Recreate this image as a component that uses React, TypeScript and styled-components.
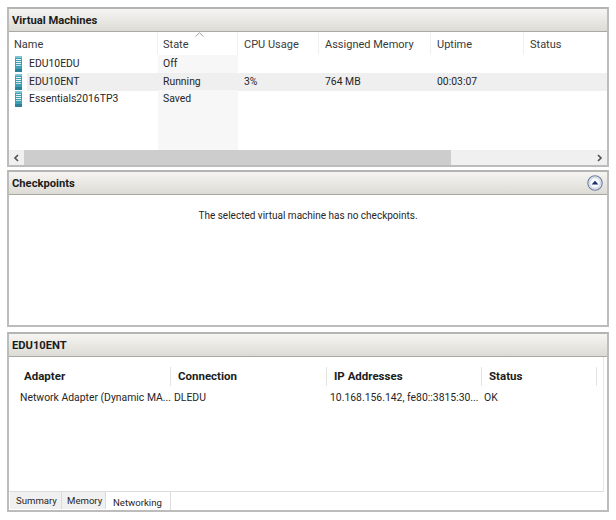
import React from 'react'
import styled, { createGlobalStyle } from 'styled-components'

const GlobalStyle = createGlobalStyle`
    html, body {
        margin: 0;
        background: #ffffff;
    }
    body {
        font-family: Roboto, "Liberation Sans", sans-serif;
        font-size: 10.4px;
        color: #262626;
    }
`;

const Page = styled.div`
    width: 602px;
    height: 520px;
    padding: 7px 0 0 7px;
    display: flex;
    flex-direction: column;
`;

const Panel = styled.section<{ $height: number; $gap: number }>`
    height: ${p => p.$height}px;
    margin-bottom: ${p => p.$gap}px;
    flex: none;
    box-sizing: border-box;
    border: 2px solid #bcbcbc;
    border-top-color: #b4b4b4;
    display: flex;
    flex-direction: column;
    background: #ffffff;
`;

const PanelHeader = styled.header`
    height: 23px;
    flex: none;
    box-sizing: border-box;
    padding: 0 4px 0 3px;
    display: flex;
    align-items: center;
    justify-content: space-between;
    background: linear-gradient(#f6f5f2, #dddbd5);
    border-bottom: 1px solid #a9a8a2;
    font-size: 11.2px;
    font-weight: 700;
    color: #1c1c1c;
`;

const vmColumns = '149px 80px 81px 112px 93px 1fr';

const VmHead = styled.div`
    display: grid;
    grid-template-columns: ${vmColumns};
    height: 23px;
    flex: none;
`;

const VmHeadCell = styled.div`
    position: relative;
    box-sizing: border-box;
    padding: 4px 0 0 5px;
    border-right: 1px solid #f0f0f0;
    font-size: 11px;
    line-height: 18px;
    color: #3a3a3a;
    &:nth-child(n + 3) {
        padding-left: 6px;
    }
    &:last-child {
        border-right: none;
    }
`;

const SortCaret = styled.svg`
    position: absolute;
    left: 37px;
    top: 0;
`;

const VmBody = styled.div`
    flex: 1;
    display: flex;
    flex-direction: column;
`;

const VmRow = styled.div<{ $fill?: boolean }>`
    display: grid;
    grid-template-columns: ${vmColumns};
    height: ${p => (p.$fill ? 'auto' : '17.6px')};
    flex: ${p => (p.$fill ? 1 : 'none')};
    line-height: 18px;
`;

const VmCell = styled.div<{ $sorted?: boolean; $selected?: boolean }>`
    padding-left: 5px;
    background: ${p => (p.$selected ? '#efefef' : p.$sorted ? '#f7f7f7' : 'transparent')};
    white-space: nowrap;
    &:nth-child(n + 3) {
        padding-left: 6px;
    }
`;

const NameCell = styled.div`
    display: flex;
    align-items: center;
`;

const IconSlot = styled.span`
    width: 18px;
    flex: none;
    display: flex;
    justify-content: center;
`;

const NameText = styled.span<{ $selected?: boolean }>`
    flex: 1;
    padding-left: 2px;
    background: ${p => (p.$selected ? '#efefef' : 'transparent')};
`;

const ScrollBar = styled.div`
    height: 15px;
    flex: none;
    display: flex;
    align-items: center;
    background: #f0f0f0;
`;

const ScrollButton = styled.span`
    width: 15px;
    height: 15px;
    flex: none;
    display: flex;
    align-items: center;
    justify-content: center;
`;

const ScrollTrack = styled.div`
    flex: 1;
    height: 15px;
`;

const ScrollThumb = styled.div`
    width: 427px;
    height: 100%;
    background: #cdcdcd;
`;

const EmptyMessage = styled.div`
    text-align: center;
    padding-top: 13px;
    font-size: 10px;
    line-height: 16px;
    color: #262626;
`;

const DetailBody = styled.div`
    flex: 1;
    margin-right: 3px;
    border-bottom: 1px solid #dcdcdc;
    border-right: 1px solid #e6e6e6;
    padding-top: 10px;
`;

const adapterColumns = '162px 156px 155px 115px';

const AdapterHead = styled.div`
    display: grid;
    grid-template-columns: ${adapterColumns};
    height: 19px;
`;

const AdapterHeadCell = styled.div`
    box-sizing: border-box;
    padding-left: 7px;
    border-right: 1px solid #e4e4e4;
    font-size: 11.5px;
    font-weight: 700;
    line-height: 19px;
    color: #1c1c1c;
    &:first-child {
        padding-left: 15px;
    }
`;

const AdapterRow = styled.div`
    display: grid;
    grid-template-columns: ${adapterColumns};
    margin-top: 4px;
    line-height: 16px;
    white-space: nowrap;
`;

const AdapterCell = styled.div`
    padding-left: 3px;
    &:first-child {
        padding-left: 11px;
    }
    &:last-child {
        padding-left: 2px;
    }
`;

const TabStrip = styled.div`
    height: 18px;
    flex: none;
    display: flex;
    padding-left: 1px;
`;

const Tab = styled.div<{ $active?: boolean; $width: number; $inset: number }>`
    box-sizing: border-box;
    width: ${p => p.$width}px;
    padding: ${p => (p.$active ? 3 : 1)}px 0 0 ${p => p.$inset}px;
    font-size: 9.6px;
    line-height: 15px;
    background: ${p => (p.$active ? '#ffffff' : '#f0f0f0')};
    border-right: 1px solid #dcdcdc;
    height: ${p => (p.$active ? '18px' : '17px')};
`;

const VmIcon = () => (
    <svg width="7" height="16" viewBox="0 0 7 16">
        <rect x="0" y="0" width="7" height="16" fill="#3f9fb5" />
        <rect x="0" y="0" width="7" height="2" fill="#7fc4d2" />
        <rect x="1" y="3" width="5" height="1" fill="#e4f2f5" />
        <rect x="1" y="5" width="5" height="1" fill="#e4f2f5" />
        <rect x="1" y="7" width="5" height="1" fill="#e4f2f5" />
        <rect x="1" y="9" width="5" height="1" fill="#bfe0e7" />
        <rect x="0" y="13" width="7" height="3" fill="#2b8198" />
    </svg>
);

const CollapseIcon = () => (
    <svg width="16" height="16" viewBox="0 0 16 16">
        <circle cx="8" cy="8" r="7.2" fill="#e6ebf3" stroke="#6d7f9c" strokeWidth="1.1" />
        <circle cx="8" cy="8" r="5.4" fill="#f7f9fc" stroke="#c3ccdb" strokeWidth="0.8" />
        <path d="M4.6 9.4 L8 5.8 L11.4 9.4 Z" fill="#1c2f6e" />
    </svg>
);

const Chevron = ({ dir }: { dir: 'left' | 'right' }) => (
    <svg width="7" height="8" viewBox="0 0 7 8">
        <path
            d={dir === 'left' ? 'M5 1 L2 4 L5 7' : 'M2 1 L5 4 L2 7'}
            fill="none"
            stroke="#505050"
            strokeWidth="1.6"
        />
    </svg>
);

const vms = [
    { name: 'EDU10EDU', state: 'Off', cpu: '', memory: '', uptime: '' },
    { name: 'EDU10ENT', state: 'Running', cpu: '3%', memory: '764 MB', uptime: '00:03:07', selected: true },
    { name: 'Essentials2016TP3', state: 'Saved', cpu: '', memory: '', uptime: '' },
];

export default function App() {
    return (
        <Page>
            <GlobalStyle />

            <Panel $height={160} $gap={3}>
                <PanelHeader>Virtual Machines</PanelHeader>
                <VmHead>
                    <VmHeadCell>Name</VmHeadCell>
                    <VmHeadCell>
                        State
                        <SortCaret width="9" height="5" viewBox="0 0 9 5">
                            <path d="M0.5 4.5 L4.5 0.8 L8.5 4.5" fill="none" stroke="#a0a0a0" />
                        </SortCaret>
                    </VmHeadCell>
                    <VmHeadCell>CPU Usage</VmHeadCell>
                    <VmHeadCell>Assigned Memory</VmHeadCell>
                    <VmHeadCell>Uptime</VmHeadCell>
                    <VmHeadCell>Status</VmHeadCell>
                </VmHead>
                <VmBody>
                    {vms.map(vm => (
                        <VmRow key={vm.name}>
                            <NameCell>
                                <IconSlot><VmIcon /></IconSlot>
                                <NameText $selected={vm.selected}>{vm.name}</NameText>
                            </NameCell>
                            <VmCell $sorted $selected={vm.selected}>{vm.state}</VmCell>
                            <VmCell $selected={vm.selected}>{vm.cpu}</VmCell>
                            <VmCell $selected={vm.selected}>{vm.memory}</VmCell>
                            <VmCell $selected={vm.selected}>{vm.uptime}</VmCell>
                            <VmCell $selected={vm.selected} />
                        </VmRow>
                    ))}
                    <VmRow $fill>
                        <VmCell />
                        <VmCell $sorted />
                    </VmRow>
                </VmBody>
                <ScrollBar>
                    <ScrollButton><Chevron dir="left" /></ScrollButton>
                    <ScrollTrack><ScrollThumb /></ScrollTrack>
                    <ScrollButton><Chevron dir="right" /></ScrollButton>
                </ScrollBar>
            </Panel>

            <Panel $height={157} $gap={5}>
                <PanelHeader>
                    Checkpoints
                    <CollapseIcon />
                </PanelHeader>
                <EmptyMessage>The selected virtual machine has no checkpoints.</EmptyMessage>
            </Panel>

            <Panel $height={180} $gap={0}>
                <PanelHeader>EDU10ENT</PanelHeader>
                <DetailBody>
                    <AdapterHead>
                        <AdapterHeadCell>Adapter</AdapterHeadCell>
                        <AdapterHeadCell>Connection</AdapterHeadCell>
                        <AdapterHeadCell>IP Addresses</AdapterHeadCell>
                        <AdapterHeadCell>Status</AdapterHeadCell>
                    </AdapterHead>
                    <AdapterRow>
                        <AdapterCell>Network Adapter (Dynamic MA...</AdapterCell>
                        <AdapterCell>DLEDU</AdapterCell>
                        <AdapterCell>10.168.156.142, fe80::3815:30...</AdapterCell>
                        <AdapterCell>OK</AdapterCell>
                    </AdapterRow>
                </DetailBody>
                <TabStrip>
                    <Tab $width={52} $inset={6}>Summary</Tab>
                    <Tab $width={44} $inset={5}>Memory</Tab>
                    <Tab $active $width={65} $inset={7}>Networking</Tab>
                </TabStrip>
            </Panel>
        </Page>
    )
}
